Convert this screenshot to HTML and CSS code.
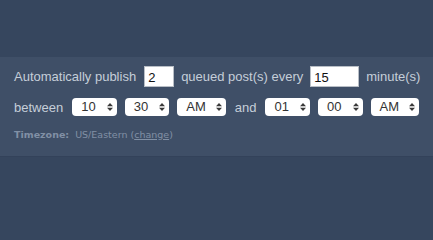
FILE: index.html
```
<!DOCTYPE html>
<html>
<head>
<meta charset="utf-8">
<link rel="stylesheet" href="styles.css">
</head>
<body>
<div class="panel">
  <div class="row row-1">
    <span class="label">Automatically publish</span>
    <input class="num num-count" type="text" value="2">
    <span class="label">queued post(s) every</span>
    <input class="num num-minutes" type="text" value="15">
    <span class="label">minute(s)</span>
  </div>
  <div class="row row-2">
    <span class="label">between</span>
    <span class="sel sel-num"><span class="sel-val">10</span><svg class="arrows" width="6" height="8" viewBox="0 0 6 8"><path d="M0 3.2 L3 0 L6 3.2 Z M0 4.8 L3 8 L6 4.8 Z" fill="#3a3a3a"/></svg></span>
    <span class="sel sel-num"><span class="sel-val">30</span><svg class="arrows" width="6" height="8" viewBox="0 0 6 8"><path d="M0 3.2 L3 0 L6 3.2 Z M0 4.8 L3 8 L6 4.8 Z" fill="#3a3a3a"/></svg></span>
    <span class="sel sel-ampm"><span class="sel-val">AM</span><svg class="arrows" width="6" height="8" viewBox="0 0 6 8"><path d="M0 3.2 L3 0 L6 3.2 Z M0 4.8 L3 8 L6 4.8 Z" fill="#3a3a3a"/></svg></span>
    <span class="label">and</span>
    <span class="sel sel-num"><span class="sel-val">01</span><svg class="arrows" width="6" height="8" viewBox="0 0 6 8"><path d="M0 3.2 L3 0 L6 3.2 Z M0 4.8 L3 8 L6 4.8 Z" fill="#3a3a3a"/></svg></span>
    <span class="sel sel-num"><span class="sel-val">00</span><svg class="arrows" width="6" height="8" viewBox="0 0 6 8"><path d="M0 3.2 L3 0 L6 3.2 Z M0 4.8 L3 8 L6 4.8 Z" fill="#3a3a3a"/></svg></span>
    <span class="sel sel-ampm"><span class="sel-val">AM</span><svg class="arrows" width="6" height="8" viewBox="0 0 6 8"><path d="M0 3.2 L3 0 L6 3.2 Z M0 4.8 L3 8 L6 4.8 Z" fill="#3a3a3a"/></svg></span>
  </div>
  <div class="row row-3">
    <span class="tz-label">Timezone:</span>
    <span class="tz-value">US/Eastern (<a class="tz-link" href="#">change</a>)</span>
  </div>
</div>
</body>
</html>
```
FILE: styles.css
```
html, body {
  margin: 0;
  padding: 0;
}
body {
  width: 433px;
  height: 207px;
  background: #36465e;
  font-family: "Liberation Sans", Arial, sans-serif;
  overflow: hidden;
}
.panel {
  margin-top: 57px;
  background: #3f4f67;
  border-bottom: 1px solid #33425a;
  padding: 9px 14px 0 14px;
  height: 90px;
}
.row {
  display: flex;
  align-items: center;
}
.row-1 {
  height: 21px;
  gap: 8px;
}
.row-1 .label:nth-of-type(2) {
  margin-left: -1px;
}
.row-2 {
  height: 18px;
  margin-top: 11px;
  gap: 9px;
}
.row-2 .sel + .sel {
  margin-left: -1px;
}
.row-3 {
  margin-top: 12px;
  height: 13px;
  font-family: "DejaVu Sans", Verdana, sans-serif;
  font-size: 9.5px;
  color: #8190a5;
}
.label {
  color: #c5ced9;
  font-size: 13px;
  white-space: nowrap;
}
.num {
  box-sizing: border-box;
  height: 21px;
  margin: 0;
  padding: 1px 3px 0 3px;
  border: 1px solid #b8bec6;
  border-radius: 0;
  background: #fff;
  font-family: "Liberation Sans", Arial, sans-serif;
  font-size: 13px;
  color: #111;
  outline: none;
}
.num-count {
  width: 30px;
}
.num-minutes {
  width: 49px;
  margin-left: -1px;
}
.row-1 .label:last-child {
  margin-left: -1px;
}
.sel {
  position: relative;
  box-sizing: border-box;
  height: 18px;
  display: inline-flex;
  align-items: center;
  background: #fff;
  border-radius: 4px;
  padding-left: 9px;
  font-size: 13px;
  color: #333;
}
.sel-num {
  width: 45px;
}
.sel-ampm {
  width: 49px;
}
.sel-val {
  line-height: 18px;
}
.arrows {
  position: absolute;
  right: 4px;
  top: 5px;
}
.tz-label {
  font-weight: bold;
  margin-right: 6px;
}
.tz-link {
  color: #8190a5;
  text-decoration: underline;
}
```
